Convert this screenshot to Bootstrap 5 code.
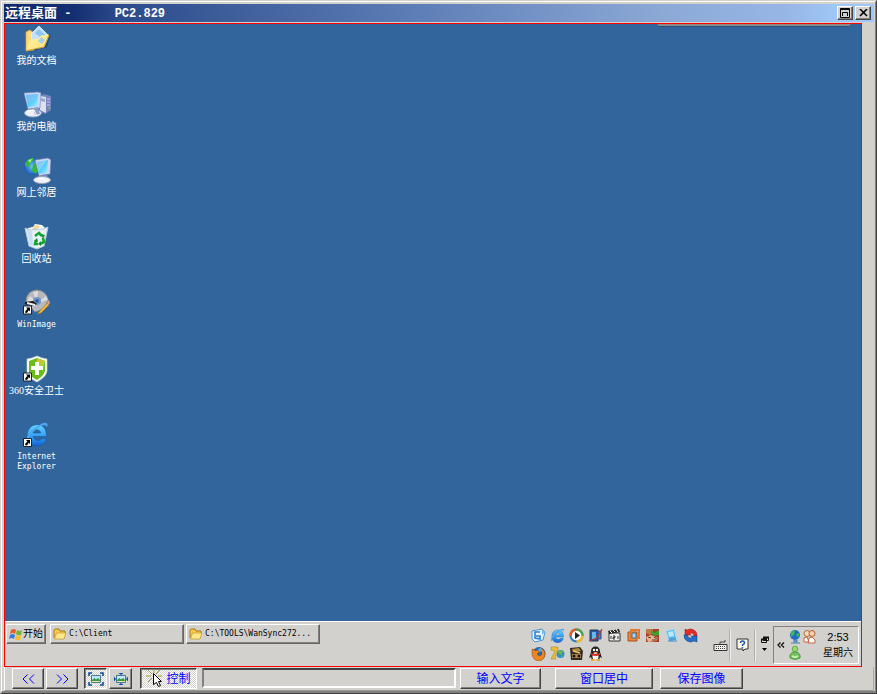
<!DOCTYPE html>
<html lang="zh-CN">
<head>
<meta charset="utf-8">
<meta name="viewport" content="width=device-width, initial-scale=1">
<title>远程桌面 - PC2.829</title>
<link rel="stylesheet" href="https://cdn.jsdelivr.net/npm/bootstrap@5.3.0/dist/css/bootstrap.min.css">
<style>
:root{--face:#d3d1cd;--shade:#828180;--dark:#424242;--desk:#31659c}
body{font-family:"Liberation Sans","Noto Sans CJK SC",sans-serif;font-size:12px;line-height:14px;background:var(--face);color:#000}
svg{display:block;flex:none}
.frame{min-height:100vh;background:var(--face);border:1px solid var(--face);border-right-color:var(--dark);border-bottom-color:var(--dark)}
.frame-inner{border:1px solid #fff;border-right-color:var(--shade);border-bottom:2px solid var(--shade);padding:2px 1px 0 2px}
.titlebar{height:19px;padding:0 3px 0 1px;border-bottom:1px solid var(--face);color:#fff;background:linear-gradient(90deg,#10286b 0,#142e72 8%,#2b4a8a 13%,#5a7ab4 45%,#8ca9d6 76%,#97b6e6 90%,#9fc8f8 96%) padding-box}
.titlebar h1{font-size:13px;line-height:18px;font-weight:700;white-space:pre}
.mono{font-family:"Liberation Mono",monospace;font-size:12px}
.bevel{background:var(--face);border:1px solid;border-color:#fff var(--dark) var(--dark) #fff;box-shadow:inset -1px -1px var(--shade);border-radius:0;padding:0;color:#000;display:flex;align-items:center;justify-content:center;white-space:nowrap;flex:none}
.sunk{border-color:var(--dark) #fff #fff var(--dark);box-shadow:inset 1px 1px var(--shade);background:repeating-conic-gradient(#fff 0 25%,var(--face) 0 50%) 0 0/2px 2px}
.capbtn{width:16px;height:14px}
.capbtn:first-of-type{margin-right:2px}
.remote{margin-right:12px;border:1px solid #f00;background:var(--desk)}
.dock{right:10px;top:0;width:194px;height:3px;background:linear-gradient(#8b8a88 66%,#28507c 66%);clip-path:polygon(0 0,100% 0,calc(100% - 3px) 100%,3px 100%)}
.shortcuts{width:63px}
.shortcut{height:66px;padding-top:1px;color:#fff;text-decoration:none;font:10px/10px "Liberation Serif","Noto Sans CJK SC",serif;text-align:center;white-space:nowrap}
.shortcut:hover{color:#fff}
.shortcut svg{margin-bottom:3px}
.shortcut .latin{font:8px/10px "DejaVu Sans Mono",monospace}
.taskbar{height:45px;background:var(--face);border-top:1px solid #fff;padding:2px 2px 2px 1px}
.task{height:20px;border-right-color:#666;border-bottom-color:#666}
.start{width:40px;font-size:10px;gap:1px;margin-right:4px}
.app{width:134px;justify-content:flex-start;padding-left:2px;gap:2px;margin-right:2px;font:8px/12px "DejaVu Sans Mono",monospace}
.quick{display:grid;grid-template-columns:repeat(9,15px);gap:3px 4px;margin-right:15px;margin-top:4px}
.rule{width:2px;height:32px;border-left:1px solid #b0aeaa;border-right:1px solid #eee}
.help{margin:0 5px}
.keys{margin-right:1px}
.tray{width:86px;height:38px;border:1px solid;border-color:var(--shade) #fff #fff var(--shade);padding:0 5px 0 3px}
.clock{font-size:11px;line-height:15px}
.clock .day{font-size:10px}
.tools{padding-left:7px;height:24px;border-right:1px solid #aaa;border-bottom:1px solid #999;border-left:1px solid #fff;padding-top:1px}
.tools .bevel{height:21px;color:#00f}
.nav-step{width:32px;margin-right:2px}
.nav-step+.sunk{margin-left:4px}
.view-btn{width:23px;margin-right:2px}
.control{width:57px;margin:0 5px 0 6px}
.well{height:20px;min-width:0;border:2px solid;border-color:var(--dark) #fff #fff var(--shade);background:var(--face);border-radius:0;padding:0 3px;margin-right:4px}
.w-send{width:81px;margin-right:14px}
.w-center{width:98px;margin-right:7px}
.w-save{width:83px}
.toolspace{width:130px}
</style>
<script src="https://cdn.jsdelivr.net/npm/bootstrap@5.3.0/dist/js/bootstrap.bundle.min.js"></script>
</head>
<body>
<svg width="0" height="0" class="position-absolute" aria-hidden="true">
<defs>
<linearGradient id="scr" x2="1" y2="1"><stop stop-color="#58a8f0"/><stop offset=".55" stop-color="#50d0ff"/><stop offset="1" stop-color="#b0e8ff"/></linearGradient>
<linearGradient id="fold" x2="1" y2="1"><stop stop-color="#fff3a8"/><stop offset="1" stop-color="#ffe270"/></linearGradient>
<radialGradient id="ball"><stop stop-color="#70c8f8"/><stop offset="1" stop-color="#1858c0"/></radialGradient>
<linearGradient id="ieg" x2="0" y2="1"><stop stop-color="#6cd0ff"/><stop offset=".6" stop-color="#2c9cf0"/><stop offset="1" stop-color="#1560d0"/></linearGradient>
</defs>
<symbol id="arrow" viewBox="0 0 9 9"><path fill="#fff" stroke="#222" d="M.5.5h8v8h-8z"/><path d="M3 2h4v4L5.700 4.800 4 7.500 2 7q0-2 2.400-3.500z"/></symbol>
<symbol id="ie" viewBox="0 0 24 24"><path d="M3 14C3 7 7 3 12.500 3 19 3 22 8 21.500 14.500H9C10 19 15 19 17 16.500h4.500C20 21 17 23.500 12.500 23.500 7 23.500 3 20 3 14zm6-3h7c-1-4-6-4-7 0z" fill="url(#ieg)" stroke="#1958a8" stroke-width=".6"/><path d="M2 22c-3-4 4-14 13-19 6-3 9-2 7 3 0-3-3-3-7-1C9 8 3 16 3 20z" fill="#4aa8ee"/></symbol>
<symbol id="folder" viewBox="0 0 14 12"><path d="M1 10V2l1-1h4l1 2h5v2" fill="#f7c94a" stroke="#a9791a"/><path d="M1.500 11 3.500 5H13l-2 6z" fill="#ffe88c" stroke="#c99a34" stroke-width=".8"/></symbol>
<symbol id="photo" viewBox="0 0 10 8"><path d="M.5.5h9v7h-9z" fill="#bfe6ff" stroke="#4d7891"/><path d="M1 5 3.500 3 5 4.500 7 3l2 2v2H1z" fill="#379b37"/><path d="M1 6.500h8" stroke="#eee4b5"/></symbol>
</svg>

<div class="frame d-flex flex-column">
<div class="frame-inner d-flex flex-column flex-fill">
<header class="titlebar d-flex align-items-center">
<h1 class="m-0 flex-fill">远程桌面<span class="mono"> -      PC2.829</span></h1>
<button type="button" class="bevel capbtn" aria-label="还原"><svg width="10" height="10" fill="none" stroke="#000"><path d="M.5.500h9v9h-9zM0 1.500h10M2.500 8V4.500h5V8"/></svg></button>
<button type="button" class="bevel capbtn" aria-label="关闭"><svg width="9" height="8"><path d="m1 0 7 7M8 0 1 7" stroke="#000" stroke-width="1.600"/></svg></button>
</header>

<main class="remote position-relative d-flex flex-column flex-fill">
<div class="dock position-absolute"></div>
<nav class="shortcuts d-flex flex-column flex-fill" aria-label="桌面">
<a href="#" class="shortcut d-flex flex-column align-items-center"><svg width="28" height="28"><path d="m6 27 18-5 4-12-3-1z" fill="#1c3f66" opacity=".6"/><path d="M3 7 7 5l4 3v17l-8 1z" fill="#ffd878" stroke="#e0a838" stroke-width=".7"/><path d="m8 9 8-8 9 9-8 9-8-3z" fill="#c4e2ff" stroke="#edf7ff" stroke-width=".7"/><path d="m12 8 4-4 6 6-4 3zM12 11l4 3" fill="#8fc4fa"/><path d="m4 25 4-10 7-1 3-3 8-1-5 12z" fill="url(#fold)" stroke="#fff0a0" stroke-width=".8"/><path d="m15 16 3-4 4 3-3 4z" fill="#a8cfee"/><path d="m4 25.500 17-3.500 5-12" stroke="#c48f28" fill="none" stroke-width=".8"/></svg>我的文档</a>
<a href="#" class="shortcut d-flex flex-column align-items-center"><svg width="28" height="28"><path d="m16 5 5-2 7 2v14l-6 4-6-3z" fill="#7781bf"/><path d="m17 5 6 1v16l-6-3z" fill="#dce1f2"/><path d="m18 7 4 1v3l-4-1z" fill="#9aa3c9"/><path d="M24 8h3m-3 3h3m-3 3h3" stroke="#c4ccf5"/><path d="M26 16v2" stroke="#67d552"/><path d="m1 2 14-1 3 1-1 15-12 1z" fill="#c9d6f1" stroke="#7588c0" stroke-width=".6"/><path d="m3 4 12-1-1 12-9 1z" fill="url(#scr)"/><path d="m3 4 12-1-1 5-10 5z" fill="#93c6fa" opacity=".5"/><ellipse cx="10" cy="22" rx="8.500" ry="4" fill="#edf0f6" stroke="#8da1c5"/><path d="m10 17 5-1 2 7-5 1z" fill="#8f9cc8"/><path d="m4 20 7-1 3 6" stroke="#fff" fill="none"/></svg>我的电脑</a>
<a href="#" class="shortcut d-flex flex-column align-items-center"><svg width="28" height="28"><circle cx="9.500" cy="9.500" r="8.500" fill="url(#ball)"/><path d="M2 6c3-4 5-5 9-5l-1 3-3 2-1 4-4-1zM10 7l5-2 1 6-3 6-4-3z" fill="#35b83b"/><path d="m5 3 4-1-2 4z" fill="#a3eb8b"/><path d="m12 3 13-2 3 2-1 14-11 2z" fill="#cad8f2" stroke="#7180b9" stroke-width=".7"/><path d="m14 5 11-2-1 13-8 1z" fill="url(#scr)"/><path d="m14 5 10-2-8 11z" fill="#afd9ff" opacity=".55"/><path d="m18 18 6-1 1 5-6 2z" fill="#7c8bb9"/><ellipse cx="19" cy="23" rx="8.500" ry="3.500" fill="#eff1f5" stroke="#95a4bf"/><path d="m14 22 6-1 3 4" stroke="#fff" fill="none"/></svg>网上邻居</a>
<a href="#" class="shortcut d-flex flex-column align-items-center"><svg width="28" height="28"><path d="m5 5 5-1 2-3 7 1 3 3-2 6H6z" fill="#fff"/><path d="m12 2 5 1-3 4-5-1z" fill="#f7d895"/><path d="m2 5 5 2 13-1 5-2-4 19-7 3-8-3z" fill="#e9f0f7" stroke="#b0cae2"/><path d="m4 7 5 1 1 15-3-1z" fill="#b9d5ed" opacity=".75"/><g fill="none" stroke="#16a52c" stroke-width="2.600"><path d="m12 13 4-3 3 3M20 15l1 4-4 2M15 21h-3l1-4"/></g><path d="m18 11 4 1-2 4zM18 18v5l-3-2zM11 18l3-3 1 4z" fill="#16922c"/></svg>回收站</a>
<a href="#" class="shortcut d-flex flex-column align-items-center"><svg width="28" height="28"><path d="M3 13A11 11 0 0 1 25 11l-4 9-9 3z" fill="#b8b9bc" stroke="#85878a"/><path d="m14 14-4-11 5-1zM14 14l9-7 2 4z" fill="#ddd"/><path d="m14 14-10-2 3-5z" fill="#ddd"/><circle cx="14" cy="12" r="4" fill="#7195c9"/><circle cx="14" cy="12" r="1.800" fill="#2c5796"/><path d="m2 13 8-1 4 3-5 2-7-2z" fill="#111"/><path d="m4 14 8 2" stroke="#eee" stroke-width="2"/><path d="m16 23 8-9 2 2-8 8-4 1z" fill="#f5b535" stroke="#9a732b" stroke-width=".6"/><path d="m24 13 2-2 1 3-2 2z" fill="#dca28d"/><use href="#arrow" y="16" width="9" height="10"/></svg><span class="latin">WinImage</span></a>
<a href="#" class="shortcut d-flex flex-column align-items-center"><svg width="28" height="28"><path d="m4 4 5-1 5-2 5 2 5 1v12c-1 5-5 8-10 11C8 24 4 21 4 16z" fill="#fff" stroke="#c7e1bd" stroke-width=".6"/><path d="m6 6 8-3 8 3v10c-1 4-4 6-8 9-5-3-8-5-8-9z" fill="#69bd1c"/><path d="m14 3 8 3-2 9-6-3z" fill="#a7d53b"/><path d="m14 4 7 2-8 5z" fill="#d4c12e"/><path d="M12 7h4v4h4v4h-4v5h-4v-5H8v-4h4z" fill="#fff"/><use href="#arrow" y="17" width="9" height="10"/></svg>360安全卫士</a>
<a href="#" class="shortcut d-flex flex-column align-items-center"><svg width="28" height="28"><use href="#ie" x="1" y="0" width="25" height="26"/><use href="#arrow" y="17" width="9" height="9"/></svg><span class="latin">Internet<br>Explorer</span></a>
</nav>

<footer class="taskbar d-flex align-items-start">
<button type="button" class="bevel task start"><svg width="13" height="13"><path d="M2 2q3-2 5 0L6 6Q4 4 1 6z" fill="#f05a24"/><path d="M8 2q2 2 5 0l-1 5q-3 1-5-1z" fill="#70b62c"/><path d="M1 7q3-2 5 0l-1 4q-2-2-5 0z" fill="#397be5"/><path d="M7 7q2 2 5 0l-1 5q-3 1-5-1z" fill="#f8c12b"/></svg>开始</button>
<button type="button" class="bevel task app"><svg width="14" height="12"><use href="#folder"/></svg>C:\Client</button>
<button type="button" class="bevel task app"><svg width="14" height="12"><use href="#folder"/></svg>C:\TOOLS\WanSync272...</button>
<div class="quick ms-auto">
<svg width="15" height="15" viewBox="0 0 15 15"><path d="M1 3 11 1l3 3-2 8-8 2-3-3z" fill="#e8f6ff" stroke="#4a91cf"/><path d="M9 4H4v6l5 1V8H5" fill="none" stroke="#247fd8" stroke-width="1.600"/><path d="m11 1 3 3-3 3z" fill="#76bdf3"/></svg>
<svg width="15" height="15"><use href="#ie"/></svg>
<svg width="15" height="15" viewBox="0 0 15 15"><circle cx="7.500" cy="7.500" r="6" fill="#fff" stroke="#287bc2" stroke-width="2"/><path d="M1.500 8a6 6 0 0 1 6-6.500" stroke="#ef5b20" stroke-width="2.400" fill="none"/><path d="M7.500 1.500a6 6 0 0 1 6 6" stroke="#49a83d" stroke-width="2.400" fill="none"/><path d="M7.500 13.500q5 0 6-6" stroke="#f4b928" stroke-width="2.400" fill="none"/><path d="m6 4 5 3.500L6 11z" fill="#222"/></svg>
<svg width="15" height="15" viewBox="0 0 15 15"><path d="M2 2h8v11H2z" fill="#245c9f" stroke="#283852"/><path d="M4 4h4v7H4z" fill="#69b3e8"/><path d="M10 3h3v8h-3z" fill="#547da9" stroke="#384b83"/><path d="m14 1-5 9-8 3" stroke="#bb353a" stroke-width="1.300" fill="none"/></svg>
<svg width="15" height="15" viewBox="0 0 15 15"><path d="M2 5h11v8H2z" fill="#eee" stroke="#333"/><path d="m1 3 11-2 1 3-11 2z" fill="#222"/><path d="m3 3 2 2m1-3 2 2m1-3 2 3" stroke="#fff"/><path d="M4 8v3m2-3h2v1.500H6V11h2m3-3v3" stroke="#333" fill="none"/></svg>
<svg width="15" height="15" viewBox="0 0 15 15"><path d="M2 4h9v9H2z" fill="#e98a3c" stroke="#ad4f19"/><path d="M5 2h8v8H5z" fill="none" stroke="#e87827" stroke-width="2"/><path d="M6 5h4v5H6z" fill="#add2ed" stroke="#42799f"/></svg>
<svg width="15" height="15" viewBox="0 0 15 15"><path d="M1 1h13v13H1z" fill="#af3b2e"/><path d="M1 1h7v4L5 7 1 5z" fill="#bd7c42"/><path d="m6 1 3 4 5-3v5l-5 1-3-3z" fill="#37a62e"/><path d="m1 9 5-2 7 3-2 3-8 1z" fill="#e1b790"/><path d="m3 9 3 1m3-1 3 2M7 12h4" stroke="#712b27"/></svg>
<svg width="15" height="15" viewBox="0 0 15 15"><path d="m2 3 8-2 3 11-8 2z" fill="#5fb6e7" stroke="#a6def5"/><path d="m4 4 5-1 1 5-5 1z" fill="#bde9fc"/><path d="M4 13h9M5 11h7" stroke="#4d88b6"/></svg>
<svg width="15" height="15" viewBox="0 0 15 15"><path d="M14 8A6.500 6.500 0 0 0 4 2L2 1v6h6L6.500 5.500q4-1.500 4.500 2.500z" fill="#e62a26" stroke="#861b24" stroke-width=".5"/><path d="M1 7a6.500 6.500 0 0 0 10 6l3 1V8H8l1.500 1.500Q5 11 4.500 7z" fill="#256fc5" stroke="#153f7d" stroke-width=".5"/></svg>
<svg width="15" height="15" viewBox="0 0 15 15"><circle cx="8" cy="7.500" r="6.500" fill="#2869ac"/><path d="M1 3q3 0 3 2l3-1 1 2-2 2 2 2q3 0 3-3 0-3-3-5 6 1 6 6 0 6-6 7-7-1-7-8z" fill="#ed861e" stroke="#824516" stroke-width=".5"/><path d="m7 3 3-1 1 3-3 1z" fill="#6aa9e1"/></svg>
<svg width="15" height="15" viewBox="0 0 15 15"><circle cx="10.500" cy="8" r="4" fill="#318fc4"/><path d="m9 4 4 1-2 4-3-2zM11 10l2-1-2 3z" fill="#69ba48"/><path d="M1 1h7v3L5 11l1 2H1l4-8-4-1z" fill="#e9bd37" stroke="#a58b30" stroke-width=".6"/></svg>
<svg width="15" height="15" viewBox="0 0 15 15"><path d="m1 2 10-1 3 4-1 9H2z" fill="#302a21"/><path d="m3 3 7-1 2 3-8 1zM3 8h9v4H3z" fill="#b08c43"/><path d="m4 5 7 2" stroke="#eec56a" stroke-width="1.500"/><circle cx="5" cy="10" r="1.500" fill="#111"/><circle cx="10" cy="10" r="1.500" fill="#111"/></svg>
<svg width="15" height="15" viewBox="0 0 15 15"><path d="M3 6q0-5.500 4.500-5.500T12 6l2 6-2-1-1 3H4l-1-3-2 1z" fill="#222"/><ellipse cx="7.500" cy="10.500" rx="3" ry="3.500" fill="#fff"/><circle cx="6" cy="4" r="1.200" fill="#fff"/><circle cx="9" cy="4" r="1.200" fill="#fff"/><path d="M5 6h5l-2 1.500zM3 13h4l-1 2H3zM8 13h4v2H9z" fill="#f4a525"/><path d="M3 7q4 2 9 0v2q-4 2-9 0z" fill="#dc2c29"/></svg>
</div>
<div class="d-flex align-items-center align-self-end">
<svg class="keys" width="15" height="13" viewBox="0 0 15 13"><path d="M1 5.500h13v6H1z" fill="#eee" stroke="#333"/><path d="M3 7.500h10M3 9.500h10" stroke="#444" stroke-dasharray="1 1"/><path d="M7 5V3h5V1" stroke="#444" fill="none"/></svg>
<div class="rule"></div>
<svg class="help" width="13" height="14" viewBox="0 0 13 14"><path d="M1 1h11v10H9l-2 2v-2H1z" fill="#fffde5" stroke="#333"/><path d="M4.500 5q0-2 2-2t2 2q0 1-2 2v1" fill="none" stroke="#2355bd" stroke-width="1.500"/><path d="M5.700 9h1.500v1.300H5.700z" fill="#2355bd"/></svg>
<div class="rule"></div>
<svg width="9" height="18" viewBox="0 0 9 18" class="mx-1"><path d="M3.500 1.500h5v3h-5zM1.500 3.500h5v3h-5z" fill="#ddd" stroke="#111"/><path d="M3 1.500h6M1 3.500h6" stroke="#111" stroke-width="2"/><path d="M2 12h5l-2.500 3z"/></svg>
<div class="tray d-flex align-items-center justify-content-between">
<svg width="8" height="8" viewBox="0 0 8 8" fill="none" stroke="#111" stroke-width="1.300"><path d="M3.500 1.500 1 4l2.500 2.500M7 1.500 4.500 4 7 6.500"/></svg>
<svg width="34" height="32" viewBox="3 0 30 32" preserveAspectRatio="xMidYMid meet"><circle cx="9" cy="6" r="5" fill="#1e6cca"/><path d="m5 3 4-2-1 5-3 2zM10 5l4-1-2 5z" fill="#42bc49"/><path d="M8 11h3v2H8zM5 14h9" stroke="#477dae" fill="#79bee2"/><circle cx="21" cy="4.500" r="3" fill="#f0ddbf" stroke="#b4683c"/><circle cx="26" cy="4.500" r="3" fill="#f7d0a8" stroke="#b75d30"/><path d="M18 13V9l3-1 2 5zM22 14l1-5 3-1 3 3v3z" fill="#fff" stroke="#d06542"/><circle cx="9" cy="20" r="2.800" fill="#9bd874" stroke="#62ad4c"/><path d="M4 29q-1-5 4-6h2q5 1 4 6-5 3-10 0z" fill="#6fc15a" stroke="#549c47"/><path d="M6 27q3 2 6 0" stroke="#caefae" fill="none" stroke-width="2"/></svg>
<time class="clock text-center text-nowrap">2:53<br><span class="day">星期六</span></time>
</div>
</div>
</footer>
</main>

<div class="tools d-flex align-items-start" role="toolbar" aria-label="远程控制">
<button type="button" class="bevel nav-step" aria-label="向左"><svg width="13" height="10" fill="none" stroke="#00f"><path d="M5.500.500 1 5l4.500 4.500M12 .500 7.500 5 12 9.500"/></svg></button>
<button type="button" class="bevel nav-step" aria-label="向右"><svg width="13" height="10" fill="none" stroke="#00f"><path d="M1 .500 5.500 5 1 9.500M7.500.500 12 5 7.500 9.500"/></svg></button>
<button type="button" class="bevel sunk view-btn" aria-label="适应窗口"><svg width="16" height="14"><use href="#photo" x="3" y="3" width="10" height="8"/><path d="M1 4V1h3M12 1h3v3M1 10v3h3m8 0h3v-3" stroke="#0c4f9c" stroke-width="1.600" fill="none"/></svg></button>
<button type="button" class="bevel view-btn" aria-label="原始尺寸"><svg width="16" height="14"><use href="#photo" x="3" y="3" width="10" height="8"/><path d="m8 3 2.500-2h-5zm0 8 2.500 2h-5zM3 7 1 4.500v5zm10 0 2-2.500v5z" fill="#0c4f9c"/></svg></button>
<button type="button" class="bevel sunk control"><svg width="20" height="19"><path d="m2 1 4 4M8 0v4m6-3-4 4M0 7h5m7 0h4M6 9l-4 4" stroke="#a7973a"/><path d="M7.500 4.500v11l3-2 2 4 2-1-2-4h3z" fill="#fff" stroke="#000"/></svg>控制</button>
<input type="text" class="well flex-fill" aria-label="状态" readonly>
<button type="button" class="bevel w-send">输入文字</button>
<button type="button" class="bevel w-center">窗口居中</button>
<button type="button" class="bevel w-save">保存图像</button>
<div class="toolspace"></div>
</div>
</div>
</div>
</body>
</html>
